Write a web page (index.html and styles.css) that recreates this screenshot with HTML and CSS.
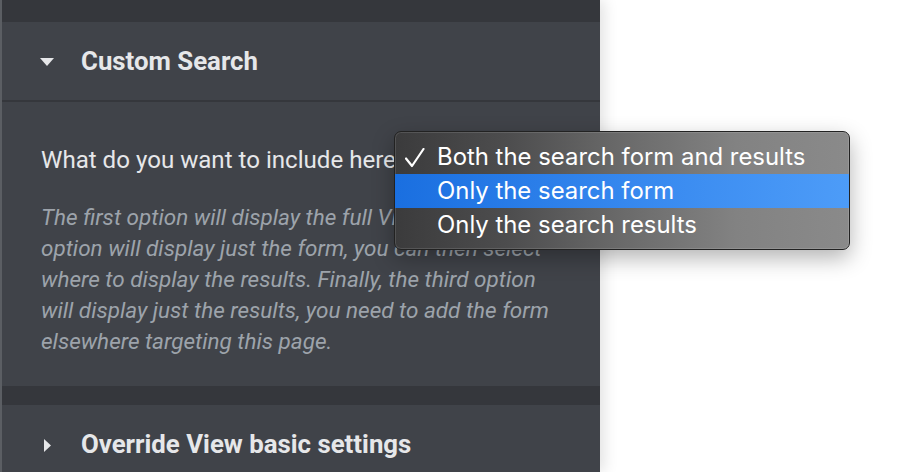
FILE: index.html
```html
<!DOCTYPE html>
<html>
<head>
<meta charset="utf-8">
<link rel="stylesheet" href="styles.css">
</head>
<body>
<div class="panel">
  <div class="topband"></div>
  <div class="sec-head open">
    <svg class="caret" width="14" height="8" viewBox="0 0 14 8"><path d="M0 0H14L7 8Z" fill="#e6e7e9"/></svg>
    <span>Custom Search</span>
  </div>
  <div class="sec-body">
    <div class="label">What do you want to include here?</div>
    <p class="desc">The first option will display the full View. The second<br>option will display just the form, you can then select<br>where to display the results. Finally, the third option<br>will display just the results, you need to add the form<br>elsewhere targeting this page.</p>
  </div>
  <div class="gapband"></div>
  <div class="sec-head">
    <svg class="caret-r" width="7" height="13" viewBox="0 0 7 13"><path d="M0 0V13L7 6.5Z" fill="#e6e7e9"/></svg>
    <span>Override View basic settings</span>
  </div>
</div>
<div class="menu">
  <div class="item"><svg class="check" width="20" height="20" viewBox="0 0 20 20"><path d="M1 10.5L7 18L18.5 1" fill="none" stroke="#fff" stroke-width="2.2" stroke-linecap="round" stroke-linejoin="round"/></svg>Both the search form and results</div>
  <div class="item sel">Only the search form</div>
  <div class="item">Only the search results</div>
</div>
</body>
</html>
```
FILE: styles.css
```css
html, body { margin: 0; padding: 0; background: #fff; height: 100%; overflow: hidden; }
body { font-family: Roboto, "Liberation Sans", sans-serif; position: relative; }
.panel {
  width: 598px; height: 472px;
  background: #404349;
  border-left: 2px solid #5b5e63;
  box-shadow: 4px 0 14px rgba(0,0,0,0.12);
  display: flex; flex-direction: column;
}
.topband { height: 22px; background: #35373c; flex: none; }
.sec-head {
  flex: none;
  height: 78px;
  display: flex; align-items: center;
  color: #e6e7e9; font-weight: 700; font-size: 25.8px;
  padding-left: 38px;
  box-sizing: border-box;
}
.sec-head.open { border-bottom: 2px solid #35373c; height: 80px; }
.sec-head .caret { margin-right: 27px; margin-top: 2px; }
.sec-head .caret-r { margin-left: 4px; margin-right: 30px; margin-top: 3px; }
.sec-body { flex: none; height: 284px; padding: 44px 0 0 39px; box-sizing: border-box; }
.label { color: #e6e7e9; font-size: 24.1px; line-height: 28px; white-space: nowrap; }
.desc { margin: 28px 0 0; color: #9da3ab; font-style: italic; font-size: 22.5px; line-height: 31px; white-space: nowrap; }
.gapband { flex: none; height: 19px; background: #35373c; }
.menu {
  position: absolute; left: 394px; top: 131px;
  width: 456px; height: 119px; box-sizing: border-box;
  border-radius: 7px;
  border: 1px solid #222;
  background: linear-gradient(90deg, #3b3b3c 0%, #4d4d4e 25%, #6a6a6a 50%, #828282 75%, #8a8a8a 100%);
  box-shadow: 0 0 0 1px rgba(255,255,255,0.12) inset, 0 8px 22px rgba(0,0,0,0.3);
  padding-top: 8px;
  font-family: Inter, "Noto Sans", sans-serif;
  font-size: 23.9px; color: #fff;
}
.item { height: 34px; line-height: 34px; padding-left: 42px; position: relative; white-space: nowrap; }
.item.sel { background: linear-gradient(90deg, #1a6fe0 0%, #3587ee 50%, #4d9cf8 100%); }
.check { position: absolute; left: 10px; top: 8px; }
```
